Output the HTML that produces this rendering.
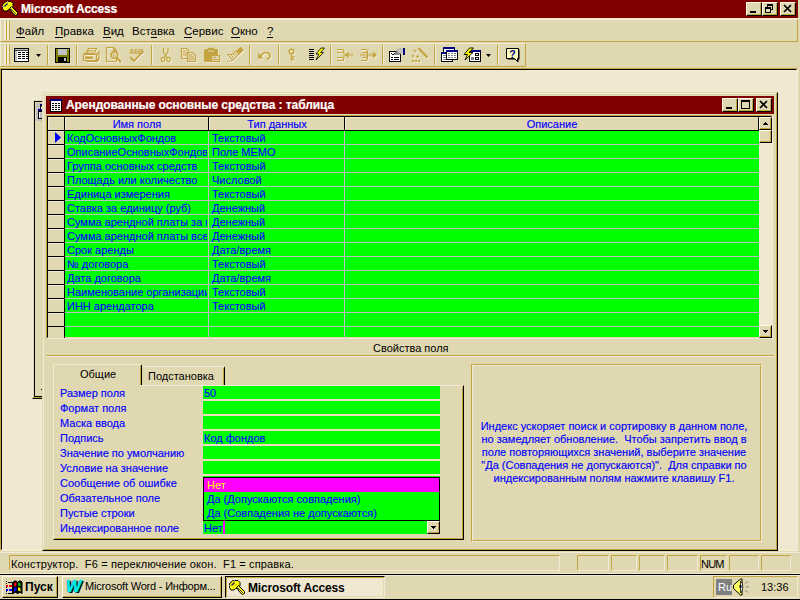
<!DOCTYPE html>
<html lang="ru">
<head>
<meta charset="utf-8">
<title>Microsoft Access</title>
<style>
html,body{margin:0;padding:0;}
body{width:800px;height:600px;overflow:hidden;background:#e0d8b0;position:relative;
 font-family:"Liberation Sans",sans-serif;font-size:11px;line-height:13px;color:#000;}
div,span{position:absolute;box-sizing:border-box;white-space:pre;}
svg{position:absolute;overflow:visible;}
u{text-decoration:none;border-bottom:1px solid #000;padding-bottom:0px;}
.tb{background:#800000;color:#fff;font-weight:bold;font-size:12px;letter-spacing:-0.15px;-webkit-text-stroke:0.2px #fff;}
.mn{font-size:11.5px;}
.btn{background:#e0d8b0;border-style:solid;border-width:1px;border-color:#fffbe6 #000 #000 #fffbe6;}
.btn:after{content:"";position:absolute;left:0;top:0;right:0;bottom:0;border-style:solid;border-width:0 1px 1px 0;border-color:#c4a440;}
.sunk{border-style:solid;border-width:1px;border-color:#c4a440 #f2ead2 #f2ead2 #c4a440;}
.rais{border-style:solid;border-width:1px;border-color:#f2ead2 #c4a440 #c4a440 #f2ead2;}
.hd{width:3px;background:#f2ead2;border-right:1px solid #c4a440;}
.bl{color:#0000ff;-webkit-text-stroke:0.15px #0000ff;}
.g{background:#00ff00;}
</style>
</head>
<body>
<!-- application title bar -->
<div class="tb" style="left:0;top:0;width:798px;height:18px;"></div>
<span class="tb" style="left:21px;top:2px;height:14px;line-height:14px;letter-spacing:-0.18px;">Microsoft Access</span>
<div class="btn" style="left:746px;top:2px;width:16px;height:14px;"></div>
<div class="btn" style="left:762px;top:2px;width:16px;height:14px;"></div>
<div class="btn" style="left:780px;top:2px;width:16px;height:14px;"></div>

<!-- menu bar -->
<div style="left:0;top:18px;width:800px;height:1px;background:#f2ead2;"></div>
<div class="rais" style="left:0;top:19px;width:798px;height:23px;"></div>
<div class="hd" style="left:4px;top:21px;height:19px;"></div>
<div class="hd" style="left:7px;top:21px;height:19px;"></div>
<span class="mn" style="left:16px;top:25px;"><u>Ф</u>айл</span>
<span class="mn" style="left:55px;top:25px;"><u>П</u>равка</span>
<span class="mn" style="left:103px;top:25px;"><u>В</u>ид</span>
<span class="mn" style="left:132px;top:25px;">Вст<u>а</u>вка</span>
<span class="mn" style="left:184px;top:25px;"><u>С</u>ервис</span>
<span class="mn" style="left:231px;top:25px;"><u>О</u>кно</span>
<span class="mn" style="left:267px;top:25px;"><u>?</u></span>

<!-- toolbar -->
<div class="rais" style="left:0;top:43px;width:526px;height:24px;"></div>
<div class="hd" style="left:4px;top:45px;height:20px;"></div>
<div class="hd" style="left:7px;top:45px;height:20px;"></div>
<svg style="left:0;top:0;" width="800" height="68" viewBox="0 0 800 68" shape-rendering="crispEdges">
<g shape-rendering="auto"><path d="M3 4L6 1.5H11L13 3.5V7L10.5 9.5H8.5L7 11H4L2.5 8.5V5Z" fill="#ffff00" stroke="#000" stroke-width="1"/><path d="M9.5 8.5L11.5 6.5L17.5 12.5L17.5 14.5L15.5 15.5L13 13.5Z" fill="#ffff00" stroke="#000" stroke-width="1"/><path d="M4.5 6.5L7.5 3.5" stroke="#202060" stroke-width="1.4"/><path d="M6.5 8.5L10.5 4.5" stroke="#a0a000" stroke-width="1" stroke-dasharray="1 1"/><path d="M10.5 8.5L16 14" stroke="#303070" stroke-width="0.9"/><path d="M7.5 1L7.5 3M2 6.5L4 6.5" stroke="#a0a8a0" stroke-width="1"/></g>
<rect x="750" y="11" width="6" height="2" fill="#000"/>
<path d="M767 4h6v6h-2v-3h-4z" fill="#000"/><rect x="768" y="6" width="4" height="3" fill="#e0d8b0"/>
<rect x="765" y="7" width="6" height="6" fill="#000"/><rect x="766" y="9" width="4" height="3" fill="#e0d8b0"/>
<g shape-rendering="auto"><path d="M784 5.5l7 7M791 5.5l-7 7" stroke="#000" stroke-width="1.7" transform="translate(0,-0.5)"/></g>
<rect x="47" y="45" width="1" height="20" fill="#c4a440"/><rect x="48" y="45" width="1" height="20" fill="#f2ead2"/>
<rect x="76" y="45" width="1" height="20" fill="#c4a440"/><rect x="77" y="45" width="1" height="20" fill="#f2ead2"/>
<rect x="151" y="45" width="1" height="20" fill="#c4a440"/><rect x="152" y="45" width="1" height="20" fill="#f2ead2"/>
<rect x="249" y="45" width="1" height="20" fill="#c4a440"/><rect x="250" y="45" width="1" height="20" fill="#f2ead2"/>
<rect x="278" y="45" width="1" height="20" fill="#c4a440"/><rect x="279" y="45" width="1" height="20" fill="#f2ead2"/>
<rect x="330" y="45" width="1" height="20" fill="#c4a440"/><rect x="331" y="45" width="1" height="20" fill="#f2ead2"/>
<rect x="382" y="45" width="1" height="20" fill="#c4a440"/><rect x="383" y="45" width="1" height="20" fill="#f2ead2"/>
<rect x="434" y="45" width="1" height="20" fill="#c4a440"/><rect x="435" y="45" width="1" height="20" fill="#f2ead2"/>
<rect x="497" y="45" width="1" height="20" fill="#c4a440"/><rect x="498" y="45" width="1" height="20" fill="#f2ead2"/>
<rect x="14" y="48" width="15" height="14" fill="#000"/><rect x="15" y="49" width="13" height="12" fill="#fff"/>
<rect x="15" y="49" width="13" height="1" fill="#c0c0c0"/><rect x="15" y="50" width="2" height="11" fill="#c0c0c0"/><rect x="15" y="50" width="13" height="1" fill="#404040"/>
<rect x="18" y="52" width="3" height="1" fill="#000"/>
<rect x="22" y="52" width="3" height="1" fill="#000"/>
<rect x="26" y="52" width="2" height="1" fill="#000"/>
<rect x="18" y="54" width="3" height="1" fill="#000"/>
<rect x="22" y="54" width="3" height="1" fill="#000"/>
<rect x="26" y="54" width="2" height="1" fill="#000"/>
<rect x="18" y="56" width="3" height="1" fill="#000"/>
<rect x="22" y="56" width="3" height="1" fill="#000"/>
<rect x="26" y="56" width="2" height="1" fill="#000"/>
<rect x="18" y="58" width="3" height="1" fill="#000"/>
<rect x="22" y="58" width="3" height="1" fill="#000"/>
<rect x="26" y="58" width="2" height="1" fill="#000"/>
<path d="M36 54h5l-2.5 3z" fill="#000" shape-rendering="auto"/>
<rect x="55" y="48" width="15" height="15" fill="#000"/><rect x="56" y="49" width="13" height="13" fill="#808000"/>
<rect x="58" y="49" width="9" height="6" fill="#c0c0c0"/><rect x="58" y="57" width="9" height="5" fill="#000"/><rect x="64" y="58" width="2" height="3" fill="#c0c0c0"/><rect x="68" y="49" width="1" height="1" fill="#e0e0a0"/>
<g shape-rendering="auto" fill="none" stroke="#c4a440" stroke-width="1.2" style="filter:drop-shadow(1px 1px 0 #f2ead2)">
<path d="M88.5 48.5h8l-2.5 5h-8z"/><path d="M88 50.5h6M87 52h6" stroke-width="0.8"/>
<path d="M83.5 54.5h13v6h-13z"/><path d="M96.5 54.5l2.5-2.5v6l-2.5 2.5"/><path d="M83.5 54.5l2-1.5M96.5 54.5l-2-1" /><rect x="85" y="56.5" width="8" height="2.5" fill="#c4a440" stroke="none"/><path d="M86 61.5h11l2-2" />
<path d="M106.5 47.5h7l3 3v11h-10z"/><path d="M113.5 47.5v3h3"/><circle cx="114.5" cy="55" r="3.3" fill="#e0d8b0" stroke-width="1.5"/><path d="M117 58l4 4" stroke-width="2"/><path d="M113.5 54v2h2" stroke-width="0.8"/>
<path d="M130 57l4 4l9.5-10" stroke-width="1.8"/>
<path d="M163.5 48v4l4 6M168 48v4l-4 6" stroke-width="1.2"/><ellipse cx="163" cy="59.5" rx="1.8" ry="2.2"/><ellipse cx="168.5" cy="59.5" rx="1.8" ry="2.2"/>
<path d="M181.500 48.500h5l2 2v8h-7z"/><path d="M183 51h3M183 53h4M183 55h4" stroke-width="0.9"/><path d="M187.500 52.500h5l3 3v6h-8z" fill="#e0d8b0"/><path d="M189 55h3M189 57h5M189 59h5" stroke-width="0.9"/>
<rect x="204" y="49" width="14" height="13" rx="2" fill="#c4a440" stroke="none"/><rect x="208" y="47.800" width="6" height="2" fill="#c4a440" stroke="none"/><path d="M208 51h6" stroke="#e0d8b0" stroke-width="1"/><rect x="211.5" y="55.5" width="8" height="6" fill="#e0d8b0"/><path d="M213 57.500h3M213 59.500h5" stroke-width="0.9"/>
<path d="M240.500 47.500l2.500 2.500l-4 4l-2.500-2.500z" fill="#c4a440"/><path d="M235.500 50.500l3.500 3.500l-6 6l-5.500-5.500h5z" stroke-width="1"/><path d="M234 52l3 3M232.500 53.500l3 3M231 55l3 3" stroke-width="0.9"/><path d="M227 61.500h4" stroke-dasharray="1 1"/><path d="M231 61l2-1.5" />
<path d="M258 53v5.500h5.500z" fill="#c4a440" stroke="none"/><path d="M261 56c1.500-4 8-5 9-0.500c0.300 2-1 3.500-3.500 3.800" stroke-width="1.600"/>
<circle cx="291.5" cy="51.5" r="2.300" stroke-width="1.5"/><path d="M291.500 54v6.500M292 57h2.500M292 59.500h2.5" stroke-width="1.5"/>
<path d="M337 49.500h6.500v3h-6.500M337 57.500h6.500v3h-6.500M344 51v8" stroke-width="1"/><path d="M344.500 55l4-3.500v7z" fill="#c4a440" stroke="none"/><rect x="348.5" y="53.5" width="5" height="3" fill="#c4a440" fill-opacity="0.55" stroke="none"/>
<path d="M361 49.500h6v3h-4M361 60.500h6v-3h-4M367.500 51v8" stroke-width="1"/><rect x="360" y="53.5" width="13" height="3" fill="#c4a440" fill-opacity="0.55" stroke="none"/><path d="M377 55l-4-3.500v7z" fill="#c4a440" stroke="none"/>
<path d="M418.500 48l9 9.5" stroke-width="2.200"/><path d="M415 49.500v3M413.500 51h3M413 54.500v3M411.500 56h3M417.500 55v3M416 56.500h3" stroke-width="0.9"/><path d="M412 61h9" stroke-width="1.800" stroke-dasharray="2 1"/>
</g>
<text x="129.5" y="53.5" font-family="Liberation Sans, sans-serif" font-size="6.5" font-weight="bold" fill="#c4a440" shape-rendering="auto">АБВ</text>
<rect x="309" y="49" width="5" height="1" fill="#000"/>
<rect x="309" y="51" width="5" height="1" fill="#000"/>
<rect x="309" y="53" width="5" height="1" fill="#000"/>
<rect x="309" y="55" width="5" height="1" fill="#000"/>
<rect x="309" y="57" width="5" height="1" fill="#000"/>
<rect x="309" y="59" width="5" height="1" fill="#000"/>
<g shape-rendering="auto"><path d="M321 48h3.500l-4 4.500h3l-7.500 7.500l3-6h-3z" fill="#ffff00" stroke="#000" stroke-width="0.8"/></g>
<rect x="389" y="51" width="12" height="11" fill="#000"/><rect x="390" y="52" width="10" height="9" fill="#fff"/><rect x="391" y="57" width="2" height="1" fill="#000"/><rect x="394" y="57" width="5" height="1" fill="#000"/><rect x="391" y="59" width="2" height="1" fill="#000"/><rect x="394" y="59" width="5" height="1" fill="#000"/>
<g shape-rendering="auto"><path d="M391 54l3 0l3-4l4-2v6l-3 1l-2 0z" fill="#808080"/><path d="M397 48.500h6v4.500h-5z" fill="#c0c0c0"/><rect x="403" y="48" width="2" height="7" fill="#000080"/><path d="M391 53l2 2l2-2" stroke="#000" fill="none" stroke-width="0.9"/></g>
<rect x="443" y="47" width="12" height="10" fill="#000"/><rect x="443" y="47" width="12" height="2" fill="#000080"/><rect x="444" y="49" width="10" height="7" fill="#fff"/>
<rect x="441" y="52" width="12" height="10" fill="#000"/><rect x="441" y="52" width="12" height="2" fill="#000080"/><rect x="442" y="54" width="10" height="7" fill="#fff"/>
<rect x="443" y="55" width="3" height="1" fill="#808080"/>
<rect x="443" y="57" width="3" height="1" fill="#808080"/>
<rect x="443" y="59" width="3" height="1" fill="#808080"/>
<rect x="446" y="50" width="12" height="10" fill="#000"/><rect x="446" y="50" width="12" height="2" fill="#000080"/><rect x="447" y="52" width="10" height="7" fill="#fff"/>
<rect x="448" y="53" width="2" height="1" fill="#808080"/>
<rect x="451" y="53" width="2" height="1" fill="#808080"/>
<rect x="454" y="53" width="2" height="1" fill="#808080"/>
<rect x="448" y="55" width="2" height="1" fill="#808080"/>
<rect x="451" y="55" width="2" height="1" fill="#808080"/>
<rect x="454" y="55" width="2" height="1" fill="#808080"/>
<rect x="448" y="57" width="2" height="1" fill="#808080"/>
<rect x="451" y="57" width="2" height="1" fill="#808080"/>
<rect x="454" y="57" width="2" height="1" fill="#808080"/>
<rect x="469" y="50" width="12" height="12" fill="#000"/><rect x="469" y="50" width="12" height="2" fill="#000080"/><rect x="470" y="52" width="10" height="9" fill="#fff"/>
<rect x="475" y="53" width="4" height="3" fill="#000"/><rect x="476" y="54" width="2" height="1" fill="#fff"/><rect x="475" y="57" width="4" height="3" fill="#000"/><rect x="476" y="58" width="2" height="1" fill="#fff"/><rect x="471" y="57" width="3" height="3" fill="#808080"/>
<g shape-rendering="auto"><path d="M469.500 48h4l-4.500 4.500h4l-8 7.500l2.500-5.500h-3.500z" fill="#ffff00" stroke="#000" stroke-width="0.9"/></g>
<path d="M486 54h5l-2.5 3z" fill="#000" shape-rendering="auto"/>
<g shape-rendering="auto"><path d="M507.500 49.500h12v10h-1v3l-3-3h-8z" fill="#000"/><path d="M506.500 48.500h12v10h-1v3l-3-3h-8z" fill="#ffffc0" stroke="#000" stroke-width="1"/></g>
<text x="509.200" y="57.5" font-family="Liberation Sans, sans-serif" font-size="10.5" font-weight="bold" fill="#000080" shape-rendering="auto">?</text>
</svg>
<!-- MDI client -->
<div style="left:0;top:68px;width:798px;height:483px;background:#f0e8d0;border-style:solid;border-width:1px;border-color:#c4a440 #f6eed8 #f6eed8 #c4a440;"></div>
<div style="left:1px;top:69px;width:796px;height:481px;border-style:solid;border-width:1px;border-color:#000 #f0e8d0 #f0e8d0 #000;"></div>
<!-- background child window -->
<div style="left:32px;top:99px;width:12px;height:300px;background:#e0d8b0;border-left:1px solid #f2ead2;border-top:1px solid #f2ead2;border-bottom:1px solid #000;"></div>
<div style="left:33px;top:397px;width:9px;height:1px;background:#c4a440;"></div>
<div style="left:41px;top:389px;width:1px;height:1px;background:#000;"></div>
<div style="left:34px;top:101px;width:10px;height:296px;border-left:1px solid #000;border-top:1px solid #000;border-bottom:1px solid #000;"></div>
<div style="left:36px;top:103px;width:8px;height:18px;background:#c0c0c0;"></div>
<svg style="left:38px;top:104px;" width="6" height="16" viewBox="0 0 6 16"><rect x="2" y="0" width="4" height="2" fill="#000080"/><rect x="2.5" y="2" width="4" height="4" fill="#fff" stroke="#000"/><rect x="0" y="5" width="6" height="2" fill="#000080"/><rect x="0.5" y="7.5" width="6" height="7" fill="#fff" stroke="#000"/><path d="M2 9h4M2 11h4M2 13h4" stroke="#808080"/></svg>
<!-- table design window -->
<div style="left:42px;top:92px;width:736px;height:459px;background:#e0d8b0;border-style:solid;border-width:1px;border-color:#e0d8b0 #000 #000 #e0d8b0;"></div>
<div style="left:43px;top:93px;width:734px;height:457px;border-style:solid;border-width:1px;border-color:#f2ead2 #c4a440 #c4a440 #f2ead2;"></div>
<div class="tb" style="left:46px;top:96px;width:728px;height:18px;"></div>
<svg style="left:50px;top:99px;" width="12" height="13" viewBox="0 0 12 13" shape-rendering="crispEdges"><rect x="0" y="0" width="12" height="13" fill="#000"/><rect x="0" y="0" width="12" height="2" fill="#000080"/><rect x="1" y="2" width="10" height="10" fill="#fff"/><path d="M2 4h2M5 4h2M8 4h2M2 6h2M5 6h2M8 6h2M2 8h2M5 8h2M8 8h2M2 10h2M5 10h2M8 10h2" stroke="#000" stroke-width="1" transform="translate(0,0.5)"/></svg>
<span class="tb" style="left:66px;top:98px;height:14px;line-height:14px;letter-spacing:-0.07px;">Арендованные основные средства : таблица</span>
<div class="btn" style="left:722px;top:98px;width:16px;height:14px;"></div>
<div class="btn" style="left:738px;top:98px;width:16px;height:14px;"></div>
<div class="btn" style="left:756px;top:98px;width:16px;height:14px;"></div>
<div style="left:46px;top:115px;width:727px;height:224px;border-style:solid;border-width:1px;border-color:#c4a440 #f2ead2 #f2ead2 #c4a440;"></div>
<div style="left:47px;top:116px;width:725px;height:222px;background:#00ff00;border-style:solid;border-width:1px;border-color:#000 #e0d8b0 #e0d8b0 #000;"></div>
<div class="bl" style="left:48px;top:117px;width:16px;height:13px;background:#e0d8b0;border-left:1px solid #f2ead2;border-top:1px solid #f2ead2;text-align:center;line-height:13px;"></div>
<div class="bl" style="left:65px;top:117px;width:143px;height:13px;background:#e0d8b0;border-left:1px solid #f2ead2;border-top:1px solid #f2ead2;text-align:center;line-height:13px;">Имя поля</div>
<div class="bl" style="left:209px;top:117px;width:135px;height:13px;background:#e0d8b0;border-left:1px solid #f2ead2;border-top:1px solid #f2ead2;text-align:center;line-height:13px;">Тип данных</div>
<div class="bl" style="left:345px;top:117px;width:413px;height:13px;background:#e0d8b0;border-left:1px solid #f2ead2;border-top:1px solid #f2ead2;text-align:center;line-height:13px;">Описание</div>
<div style="left:48px;top:130px;width:711px;height:1px;background:#000;"></div>
<div style="left:64px;top:117px;width:1px;height:221px;background:#000;"></div>
<div style="left:208px;top:117px;width:1px;height:14px;background:#000;"></div>
<div style="left:344px;top:117px;width:1px;height:14px;background:#000;"></div>
<div style="left:758px;top:117px;width:1px;height:14px;background:#000;"></div>
<div style="left:48px;top:131px;width:16px;height:207px;background:#e0d8b0;"></div>
<div style="left:208px;top:131px;width:1px;height:207px;background:#c0c0c0;"></div>
<div style="left:344px;top:131px;width:1px;height:207px;background:#c0c0c0;"></div>
<div style="left:65px;top:144px;width:694px;height:1px;background:#c0c0c0;"></div>
<div style="left:48px;top:144px;width:16px;height:1px;background:#000;"></div>
<div style="left:48px;top:131px;width:16px;height:1px;background:#f2ead2;"></div>
<div class="bl" style="left:67px;top:132px;width:140px;height:13px;line-height:13px;overflow:hidden;">КодОсновныхФондов</div>
<span class="bl" style="left:212px;top:132px;line-height:13px;">Текстовый</span>
<div style="left:65px;top:158px;width:694px;height:1px;background:#c0c0c0;"></div>
<div style="left:48px;top:158px;width:16px;height:1px;background:#000;"></div>
<div style="left:48px;top:145px;width:16px;height:1px;background:#f2ead2;"></div>
<div class="bl" style="left:67px;top:146px;width:140px;height:13px;line-height:13px;overflow:hidden;">ОписаниеОсновныхФондов</div>
<span class="bl" style="left:212px;top:146px;line-height:13px;">Поле MEMO</span>
<div style="left:65px;top:172px;width:694px;height:1px;background:#c0c0c0;"></div>
<div style="left:48px;top:172px;width:16px;height:1px;background:#000;"></div>
<div style="left:48px;top:159px;width:16px;height:1px;background:#f2ead2;"></div>
<div class="bl" style="left:67px;top:160px;width:140px;height:13px;line-height:13px;overflow:hidden;">Группа основных средств</div>
<span class="bl" style="left:212px;top:160px;line-height:13px;">Текстовый</span>
<div style="left:65px;top:186px;width:694px;height:1px;background:#c0c0c0;"></div>
<div style="left:48px;top:186px;width:16px;height:1px;background:#000;"></div>
<div style="left:48px;top:173px;width:16px;height:1px;background:#f2ead2;"></div>
<div class="bl" style="left:67px;top:174px;width:140px;height:13px;line-height:13px;overflow:hidden;">Площадь или количество</div>
<span class="bl" style="left:212px;top:174px;line-height:13px;">Числовой</span>
<div style="left:65px;top:200px;width:694px;height:1px;background:#c0c0c0;"></div>
<div style="left:48px;top:200px;width:16px;height:1px;background:#000;"></div>
<div style="left:48px;top:187px;width:16px;height:1px;background:#f2ead2;"></div>
<div class="bl" style="left:67px;top:188px;width:140px;height:13px;line-height:13px;overflow:hidden;">Единица измерения</div>
<span class="bl" style="left:212px;top:188px;line-height:13px;">Текстовый</span>
<div style="left:65px;top:214px;width:694px;height:1px;background:#c0c0c0;"></div>
<div style="left:48px;top:214px;width:16px;height:1px;background:#000;"></div>
<div style="left:48px;top:201px;width:16px;height:1px;background:#f2ead2;"></div>
<div class="bl" style="left:67px;top:202px;width:140px;height:13px;line-height:13px;overflow:hidden;">Ставка за единицу (руб)</div>
<span class="bl" style="left:212px;top:202px;line-height:13px;">Денежный</span>
<div style="left:65px;top:228px;width:694px;height:1px;background:#c0c0c0;"></div>
<div style="left:48px;top:228px;width:16px;height:1px;background:#000;"></div>
<div style="left:48px;top:215px;width:16px;height:1px;background:#f2ead2;"></div>
<div class="bl" style="left:67px;top:216px;width:140px;height:13px;line-height:13px;overflow:hidden;">Сумма арендной платы за месяц</div>
<span class="bl" style="left:212px;top:216px;line-height:13px;">Денежный</span>
<div style="left:65px;top:242px;width:694px;height:1px;background:#c0c0c0;"></div>
<div style="left:48px;top:242px;width:16px;height:1px;background:#000;"></div>
<div style="left:48px;top:229px;width:16px;height:1px;background:#f2ead2;"></div>
<div class="bl" style="left:67px;top:230px;width:140px;height:13px;line-height:13px;overflow:hidden;">Сумма арендной платы всего</div>
<span class="bl" style="left:212px;top:230px;line-height:13px;">Денежный</span>
<div style="left:65px;top:256px;width:694px;height:1px;background:#c0c0c0;"></div>
<div style="left:48px;top:256px;width:16px;height:1px;background:#000;"></div>
<div style="left:48px;top:243px;width:16px;height:1px;background:#f2ead2;"></div>
<div class="bl" style="left:67px;top:244px;width:140px;height:13px;line-height:13px;overflow:hidden;">Срок аренды</div>
<span class="bl" style="left:212px;top:244px;line-height:13px;">Дата/время</span>
<div style="left:65px;top:270px;width:694px;height:1px;background:#c0c0c0;"></div>
<div style="left:48px;top:270px;width:16px;height:1px;background:#000;"></div>
<div style="left:48px;top:257px;width:16px;height:1px;background:#f2ead2;"></div>
<div class="bl" style="left:67px;top:258px;width:140px;height:13px;line-height:13px;overflow:hidden;">№ договора</div>
<span class="bl" style="left:212px;top:258px;line-height:13px;">Текстовый</span>
<div style="left:65px;top:284px;width:694px;height:1px;background:#c0c0c0;"></div>
<div style="left:48px;top:284px;width:16px;height:1px;background:#000;"></div>
<div style="left:48px;top:271px;width:16px;height:1px;background:#f2ead2;"></div>
<div class="bl" style="left:67px;top:272px;width:140px;height:13px;line-height:13px;overflow:hidden;">Дата договора</div>
<span class="bl" style="left:212px;top:272px;line-height:13px;">Дата/время</span>
<div style="left:65px;top:298px;width:694px;height:1px;background:#c0c0c0;"></div>
<div style="left:48px;top:298px;width:16px;height:1px;background:#000;"></div>
<div style="left:48px;top:285px;width:16px;height:1px;background:#f2ead2;"></div>
<div class="bl" style="left:67px;top:286px;width:140px;height:13px;line-height:13px;overflow:hidden;">Наименование организации</div>
<span class="bl" style="left:212px;top:286px;line-height:13px;">Текстовый</span>
<div style="left:65px;top:312px;width:694px;height:1px;background:#c0c0c0;"></div>
<div style="left:48px;top:312px;width:16px;height:1px;background:#000;"></div>
<div style="left:48px;top:299px;width:16px;height:1px;background:#f2ead2;"></div>
<div class="bl" style="left:67px;top:300px;width:140px;height:13px;line-height:13px;overflow:hidden;">ИНН арендатора</div>
<span class="bl" style="left:212px;top:300px;line-height:13px;">Текстовый</span>
<div style="left:65px;top:326px;width:694px;height:1px;background:#c0c0c0;"></div>
<div style="left:48px;top:326px;width:16px;height:1px;background:#000;"></div>
<div style="left:48px;top:313px;width:16px;height:1px;background:#f2ead2;"></div>
<svg style="left:55px;top:132px;" width="6" height="11" viewBox="0 0 6 11"><path d="M0 0L6 5.5L0 11Z" fill="#0000ff"/></svg>
<div style="left:759px;top:117px;width:13px;height:221px;background:#f0e8d0;"></div>
<div class="btn" style="left:759px;top:117px;width:13px;height:13px;"></div>
<div class="btn" style="left:759px;top:130px;width:13px;height:13px;"></div>
<div class="btn" style="left:759px;top:325px;width:13px;height:13px;"></div>
<svg style="left:763px;top:122px;" width="5" height="3" viewBox="0 0 5 3" shape-rendering="crispEdges"><path d="M2 0h1v1h-1zM1 1h3v1h-3zM0 2h5v1h-5z" fill="#000"/></svg>
<svg style="left:763px;top:330px;" width="5" height="3" viewBox="0 0 5 3" shape-rendering="crispEdges"><path d="M0 0h5v1h-5zM1 1h3v1h-3zM2 2h1v1h-1z" fill="#000"/></svg>
<!-- field properties -->
<span style="left:373px;top:342px;line-height:13px;">Свойства поля</span>
<div style="left:46px;top:355px;width:728px;height:2px;border-top:1px solid #c4a440;border-bottom:1px solid #f2ead2;"></div>
<div style="left:53px;top:385px;width:411px;height:155px;border-style:solid;border-width:1px;border-color:#f2ead2 #000 #000 #f2ead2;"></div>
<div style="left:54px;top:386px;width:409px;height:153px;border-style:solid;border-width:1px;border-color:#e0d8b0 #c4a440 #c4a440 #e0d8b0;"></div>
<div style="left:142px;top:366px;width:83px;height:19px;border-style:solid;border-width:1px 1px 0 0;border-color:#f2ead2 #000 #000 #f2ead2;border-radius:0 2px 0 0;"></div>
<div style="left:143px;top:368px;width:81px;height:17px;border-right:1px solid #c4a440;"></div>
<span style="left:148px;top:370px;line-height:13px;">Подстановка</span>
<div style="left:53px;top:364px;width:89px;height:21px;background:#e0d8b0;border-style:solid;border-width:1px 1px 0 1px;border-color:#f2ead2 #000 #000 #f2ead2;border-radius:2px 2px 0 0;"></div>
<div style="left:54px;top:366px;width:87px;height:19px;border-right:1px solid #c4a440;"></div>
<div style="left:54px;top:385px;width:87px;height:1px;background:#e0d8b0;"></div>
<span style="left:80px;top:368px;line-height:13px;">Общие</span>
<div style="left:203px;top:386px;width:237px;height:148px;background:#f4dcc0;"></div>
<span class="bl" style="left:60px;top:387px;line-height:13px;">Размер поля</span>
<div class="g" style="left:203px;top:386px;width:237px;height:13px;"></div>
<span class="bl" style="left:204px;top:387px;line-height:13px;">50</span>
<span class="bl" style="left:60px;top:402px;line-height:13px;">Формат поля</span>
<div class="g" style="left:203px;top:401px;width:237px;height:13px;"></div>
<span class="bl" style="left:60px;top:417px;line-height:13px;">Маска ввода</span>
<div class="g" style="left:203px;top:416px;width:237px;height:13px;"></div>
<span class="bl" style="left:60px;top:432px;line-height:13px;">Подпись</span>
<div class="g" style="left:203px;top:431px;width:237px;height:13px;"></div>
<span class="bl" style="left:204px;top:432px;line-height:13px;">Код фондов</span>
<span class="bl" style="left:60px;top:447px;line-height:13px;">Значение по умолчанию</span>
<div class="g" style="left:203px;top:446px;width:237px;height:13px;"></div>
<span class="bl" style="left:60px;top:462px;line-height:13px;">Условие на значение</span>
<div class="g" style="left:203px;top:461px;width:237px;height:13px;"></div>
<span class="bl" style="left:60px;top:477px;line-height:13px;">Сообщение об ошибке</span>
<div class="g" style="left:203px;top:476px;width:237px;height:13px;"></div>
<span class="bl" style="left:60px;top:492px;line-height:13px;">Обязательное поле</span>
<div class="g" style="left:203px;top:491px;width:237px;height:13px;"></div>
<span class="bl" style="left:60px;top:507px;line-height:13px;">Пустые строки</span>
<div class="g" style="left:203px;top:506px;width:237px;height:13px;"></div>
<span class="bl" style="left:60px;top:522px;line-height:13px;">Индексированное поле</span>
<div class="g" style="left:203px;top:521px;width:237px;height:13px;"></div>
<span class="bl" style="left:204px;top:522px;line-height:13px;">Нет</span>
<div style="left:223px;top:521px;width:2px;height:13px;background:#ff00ff;"></div>
<div class="btn" style="left:427px;top:521px;width:13px;height:13px;"></div>
<svg style="left:431px;top:526px;" width="5" height="3" viewBox="0 0 5 3" shape-rendering="crispEdges"><path d="M0 0h5v1h-5zM1 1h3v1h-3zM2 2h1v1h-1z" fill="#000"/></svg>
<div class="g" style="left:203px;top:477px;width:237px;height:44px;border:1px solid #000;"></div>
<div style="left:204px;top:478px;width:235px;height:14px;background:#ff00ff;"></div>
<span style="left:207px;top:479px;line-height:13px;color:#ffff00;">Нет</span>
<span class="bl" style="left:207px;top:493px;line-height:13px;">Да (Допускаются совпадения)</span>
<span class="bl" style="left:207px;top:507px;line-height:13px;">Да (Совпадения не допускаются)</span>
<div style="left:471px;top:364px;width:291px;height:178px;border-style:solid;border-width:1px;border-color:#c4a440 #f2ead2 #f2ead2 #c4a440;"></div>
<div style="left:472px;top:365px;width:289px;height:176px;border-style:solid;border-width:1px;border-color:#f2ead2 #c4a440 #c4a440 #f2ead2;"></div>
<div class="bl" style="left:470px;top:420px;width:288px;text-align:center;line-height:13px;">Индекс ускоряет поиск и сортировку в данном поле,
но замедляет обновление.  Чтобы запретить ввод в
поле повторяющихся значений, выберите значение
"Да (Совпадения не допускаются)".  Для справки по
индексированным полям нажмите клавишу F1.</div>
<svg style="left:0;top:90px;" width="800" height="30" viewBox="0 90 800 30" shape-rendering="crispEdges">
<rect x="726" y="107" width="6" height="2" fill="#000"/>
<rect x="741" y="100" width="9" height="9" fill="#000"/><rect x="742" y="102" width="7" height="6" fill="#e0d8b0"/>
<g shape-rendering="auto"><path d="M760 101.5l7 7M767 101.5l-7 7" stroke="#000" stroke-width="1.7" transform="translate(0,-0.5)"/></g>
</svg>
<!-- status bar and taskbar -->
<div style="left:0;top:552px;width:800px;height:1px;background:#f2ead2;"></div>
<div class="sunk" style="left:9px;top:555px;width:551px;height:16px;"></div>
<span style="left:11px;top:558px;line-height:13px;letter-spacing:0.14px;">Конструктор.  F6 = переключение окон.  F1 = справка.</span>
<div class="sunk" style="left:577px;top:555px;width:32px;height:16px;"></div>
<div class="sunk" style="left:611px;top:555px;width:26px;height:16px;"></div>
<div class="sunk" style="left:639px;top:555px;width:26px;height:16px;"></div>
<div class="sunk" style="left:667px;top:555px;width:31px;height:16px;"></div>
<div class="sunk" style="left:700px;top:555px;width:27px;height:16px;"></div>
<div class="sunk" style="left:729px;top:555px;width:30px;height:16px;"></div>
<div class="sunk" style="left:761px;top:555px;width:30px;height:16px;"></div>
<span style="left:701px;top:558px;line-height:13px;letter-spacing:-0.8px;">NUM</span>
<div style="left:0;top:573px;width:800px;height:1px;background:#f0e8d0;"></div>
<div style="left:0;top:574px;width:800px;height:1px;background:#000;"></div>
<div style="left:0;top:575px;width:800px;height:1px;background:#f2ead2;"></div>
<div style="left:0;top:599px;width:800px;height:1px;background:#000;"></div>
<div class="btn" style="left:2px;top:576px;width:56px;height:22px;"></div>
<span style="left:25px;top:580px;line-height:14px;font-weight:bold;font-size:12px;">Пуск</span>
<div class="btn" style="left:62px;top:576px;width:160px;height:22px;"></div>
<span style="left:85px;top:580px;line-height:13px;letter-spacing:-0.2px;">Microsoft Word - Информ...</span>
<div style="left:225px;top:576px;width:160px;height:22px;background:#f0e8d0;border-style:solid;border-width:1px;border-color:#000 #f2ead2 #f2ead2 #000;"></div>
<div style="left:226px;top:577px;width:158px;height:20px;border-style:solid;border-width:1px;border-color:#c4a440 #e0d8b0 #e0d8b0 #c4a440;"></div>
<span style="left:248px;top:581px;line-height:14px;font-weight:bold;font-size:12px;letter-spacing:-0.15px;">Microsoft Access</span>
<div class="sunk" style="left:713px;top:576px;width:85px;height:22px;"></div>
<div style="left:716px;top:579px;width:16px;height:16px;background:#808080;"></div>
<span style="left:718px;top:581px;line-height:13px;color:#fff;">Ru</span>
<span style="left:761px;top:581px;line-height:13px;">13:36</span>
<svg style="left:0;top:574px;" width="800" height="26" viewBox="0 574 800 26" shape-rendering="crispEdges">
<g shape-rendering="auto"><path d="M12.5 582.5c2-2 4-2 5 0c1.5-2 3-2 4.5-0.5v11.5c-1.5-1.5-3-1.5-4.5 0.5c-1-2-3-2-5 0z" fill="#000" stroke="#000" stroke-width="1"/><path d="M14 583.200l2.5-1.200v3.5l-2.5 1z" fill="#ff0000"/><path d="M18 582.5l2.5 0.700v3.300l-2.5-0.8z" fill="#00c000"/><path d="M14 588l2.5-1v3.5l-2.5 1.200z" fill="#0000ff"/><path d="M18 587.200l2.5 0.8v3.5l-2.5-1z" fill="#ffff00"/></g>
<rect x="6" y="581" width="1" height="1" fill="#000"/>
<rect x="6" y="583" width="1" height="1" fill="#000"/>
<rect x="6" y="585" width="1" height="1" fill="#000"/>
<rect x="6" y="587" width="1" height="1" fill="#000"/>
<rect x="6" y="589" width="1" height="1" fill="#000"/>
<rect x="6" y="591" width="1" height="1" fill="#000"/>
<rect x="6" y="593" width="1" height="1" fill="#000"/>
<rect x="8" y="582" width="4" height="1" fill="#000"/><rect x="8" y="593" width="4" height="1" fill="#000"/>
<rect x="6" y="585" width="2" height="2" fill="#ff0000"/><rect x="9" y="585" width="3" height="2" fill="#ff0000"/>
<rect x="6" y="589" width="2" height="2" fill="#0000ff"/><rect x="9" y="589" width="3" height="2" fill="#0000ff"/>
<g shape-rendering="auto" transform="translate(227,579)"><path d="M3 4L6 1.5H11L13 3.5V7L10.5 9.5H8.5L7 11H4L2.5 8.5V5Z" fill="#ffff00" stroke="#000" stroke-width="1"/><path d="M9.5 8.5L11.5 6.5L17.5 12.5L17.5 14.5L15.5 15.5L13 13.5Z" fill="#ffff00" stroke="#000" stroke-width="1"/><path d="M4.5 6.5L7.5 3.5" stroke="#202060" stroke-width="1.4"/><path d="M6.5 8.5L10.5 4.5" stroke="#a0a000" stroke-width="1" stroke-dasharray="1 1"/><path d="M10.5 8.5L16 14" stroke="#303070" stroke-width="0.9"/><path d="M7.5 1L7.5 3M2 6.5L4 6.5" stroke="#a0a8a0" stroke-width="1"/></g>
<g shape-rendering="auto"><path d="M733.5 585v3.5l7 6.5h1.5v-16h-1.5z" fill="#ffff60" stroke="#000" stroke-width="1"/><path d="M740.5 581c3 2 3 9 0 12z" fill="#fff" stroke="#000" stroke-width="0.8"/><rect x="739.5" y="585" width="2" height="3" fill="#000"/><path d="M745 583.5l3-2M745.5 587h3.5M745 590.5l3 2" stroke="#909090" stroke-width="1"/></g>
</svg>
<span style="left:66px;top:578px;font-family:'Liberation Sans',sans-serif;font-weight:bold;font-style:italic;font-size:16px;line-height:18px;color:#00f0f0;-webkit-text-stroke:0.6px #00f0f0;text-shadow:1px 1px 0 #000,1.5px 1px 0 #000,-0.5px 0 0 #000;">W</span>
</body>
</html>
